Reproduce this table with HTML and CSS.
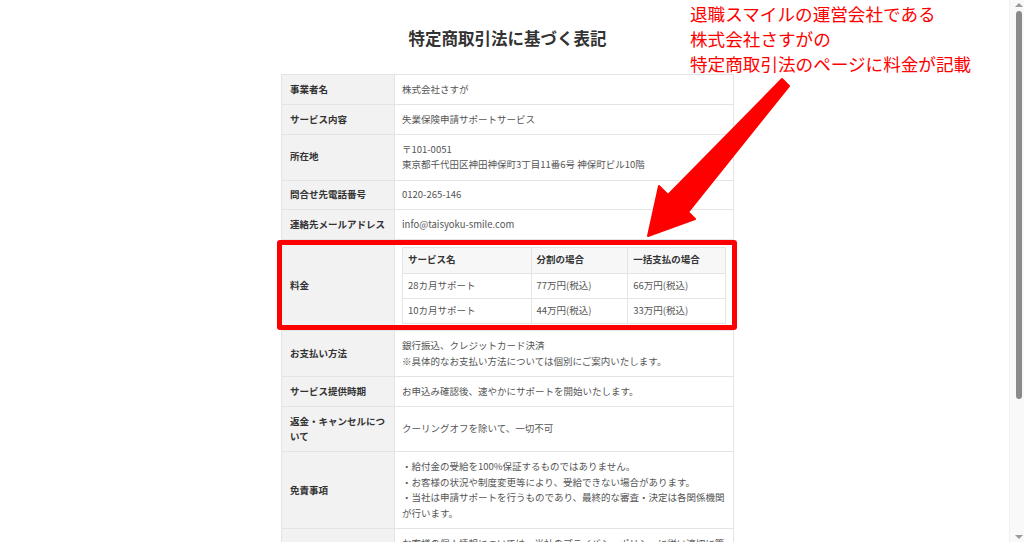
FILE: index.html
```html
<!DOCTYPE html>
<html lang="ja">
<head>
<meta charset="utf-8">
<title>特定商取引法に基づく表記</title>
<link rel="stylesheet" href="styles.css">
</head>
<body>
<div class="page">
  <main class="main">
    <h1 class="title">特定商取引法に基づく表記</h1>
    <table class="law">
      <tr><th>事業者名</th><td>株式会社さすが</td></tr>
      <tr><th>サービス内容</th><td>失業保険申請サポートサービス</td></tr>
      <tr><th>所在地</th><td>〒101-0051<br>東京都千代田区神田神保町3丁目11番6号 神保町ビル10階</td></tr>
      <tr><th>問合せ先電話番号</th><td>0120-265-146</td></tr>
      <tr><th>連絡先メールアドレス</th><td>info@taisyoku-smile.com</td></tr>
      <tr class="fee-row"><th>料金</th><td class="fee-cell">
        <table class="fee">
          <tr><th class="c1">サービス名</th><th class="c2">分割の場合</th><th class="c3">一括支払の場合</th></tr>
          <tr><td>28カ月サポート</td><td>77万円(税込)</td><td>66万円(税込)</td></tr>
          <tr><td>10カ月サポート</td><td>44万円(税込)</td><td>33万円(税込)</td></tr>
        </table>
      </td></tr>
      <tr><th>お支払い方法</th><td>銀行振込、クレジットカード決済<br>※具体的なお支払い方法については個別にご案内いたします。</td></tr>
      <tr><th>サービス提供時期</th><td>お申込み確認後、速やかにサポートを開始いたします。</td></tr>
      <tr><th>返金・キャンセルについて</th><td>クーリングオフを除いて、一切不可</td></tr>
      <tr><th>免責事項</th><td>・給付金の受給を100%保証するものではありません。<br>・お客様の状況や制度変更等により、受給できない場合があります。<br>・当社は申請サポートを行うものであり、最終的な審査・決定は各関係機関が行います。</td></tr>
      <tr><th>個人情報の取扱い</th><td>お客様の個人情報については、当社のプライバシーポリシーに従い適切に管理いたします。</td></tr>
    </table>

    <div class="annotation">
      <p class="note">退職スマイルの運営会社である<br>株式会社さすがの<br>特定商取引法のページに料金が記載</p>
      <div class="redbox"></div>
      <svg class="arrow" width="1009" height="542" viewBox="0 0 1009 542">
        <polygon points="782,79 789,86 688,212 695,219 648,236 659,186 668,195" fill="#ff0000" stroke="#ff0000" stroke-width="2" stroke-linejoin="round"/>
      </svg>
    </div>
  </main>
  <aside class="scrollbar">
    <span class="arr-up"></span>
    <div class="thumb"></div>
    <span class="arr-down"></span>
  </aside>
</div>
</body>
</html>
```

FILE: styles.css
```css
html, body {
  margin: 0;
  padding: 0;
  height: 542px;
  overflow: hidden;
  background: #ffffff;
}

body {
  font-family: "Noto Sans CJK JP", "Noto Sans", sans-serif;
  color: #444;
}

.page {
  display: flex;
  width: 1024px;
  height: 542px;
}

.main {
  position: relative;
  flex: 1;
  display: flex;
  flex-direction: column;
  align-items: center;
  padding-left: 6px;
  padding-top: 26px;
  overflow: hidden;
}

.title {
  margin: 0 0 24px;
  font-size: 16.5px;
  line-height: 24px;
  font-weight: 700;
  color: #333;
}

.law {
  width: 453px;
  border-collapse: collapse;
  font-size: 9.5px;
  line-height: 15.6px;
  flex-shrink: 0;
}

.law > tbody > tr > th {
  width: 97px;
  background: #f2f2f2;
  color: #333;
  font-weight: 700;
  text-align: left;
  padding: 6.7px 8px;
  border: 1px solid #e4e4e4;
  vertical-align: middle;
}

.law > tbody > tr > td {
  padding: 6.7px 7px;
  border: 1px solid #e4e4e4;
  color: #555;
  vertical-align: middle;
}

.law > tbody > tr > td.fee-cell {
  padding: 7px 7px 6px 7px;
}

.fee {
  width: 324px;
  border-collapse: collapse;
  font-size: 9.5px;
  line-height: 15.6px;
}

.fee th,
.fee td {
  border: 1px solid #e4e4e4;
  padding: 4.4px 5px;
  text-align: left;
  color: #555;
}

.fee th {
  background: #f7f7f7;
  color: #333;
  font-weight: 700;
  padding: 4px 5px 4.6px;
}

.fee .c1 { width: 118px; }
.fee .c2 { width: 86px; }
.fee .c3 { width: 87px; }

.annotation {
  position: absolute;
  left: 0;
  top: 0;
  width: 1009px;
  height: 542px;
  pointer-events: none;
}

.note {
  position: absolute;
  left: 690px;
  top: 1px;
  margin: 0;
  font-size: 17.6px;
  line-height: 25px;
  color: #ff0000;
  font-weight: 400;
  white-space: nowrap;
}

.redbox {
  position: absolute;
  left: 277px;
  top: 240px;
  width: 450px;
  height: 80px;
  border: 5px solid #ff0000;
  border-radius: 3px;
}

.arrow {
  position: absolute;
  left: 0;
  top: 0;
}

.scrollbar {
  position: relative;
  width: 15px;
  flex-shrink: 0;
  background: #f9f9f9;
  border-left: 1px solid #f0f0f0;
  box-sizing: border-box;
}

.thumb {
  position: absolute;
  left: 6px;
  top: 11px;
  width: 6px;
  height: 388px;
  background: #8a8a8a;
  border-radius: 3px;
}

.arr-up,
.arr-down {
  position: absolute;
  left: 5px;
  width: 0;
  height: 0;
  border-left: 4px solid transparent;
  border-right: 4px solid transparent;
}

.arr-up {
  top: 3px;
  border-bottom: 4px solid #9a9a9a;
}

.arr-down {
  bottom: 3px;
  border-top: 4px solid #9a9a9a;
}
```
